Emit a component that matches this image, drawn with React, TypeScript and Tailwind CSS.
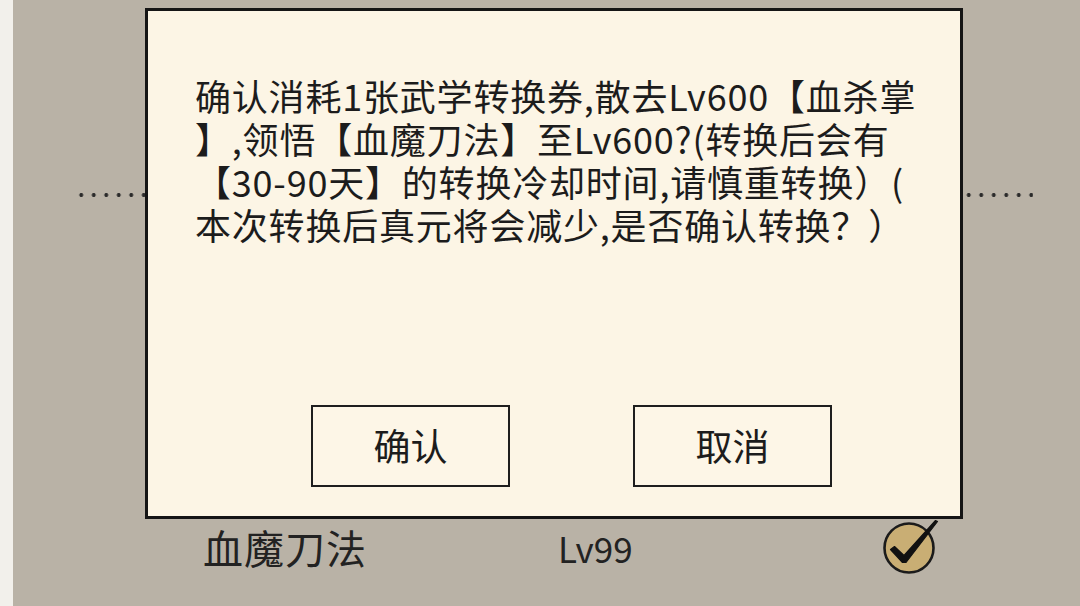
import React from "react";

const font = { fontFamily: '"Noto Sans CJK SC", "Noto Sans", sans-serif' };

function CheckBadge() {
  return (
    <svg width="60" height="60" viewBox="0 0 60 60" className="block">
      <circle cx="28" cy="30" r="24.5" fill="#c9ae74" stroke="#1b1b1b" strokeWidth="2.6" />
      <path
        d="M9.5 31.5 L13.5 28.5 L23 37.5 L54.5 2.5 L56.5 3.5 L25 44.5 L21.5 44.5 Z"
        fill="#111"
        stroke="#111"
        strokeWidth="1.2"
        strokeLinejoin="round"
      />
    </svg>
  );
}

const lines = [
  "确认消耗1张武学转换券,散去Lv600【血杀掌",
  "】,领悟【血魔刀法】至Lv600?(转换后会有",
  "【30-90天】的转换冷却时间,请慎重转换）(",
  "本次转换后真元将会减少,是否确认转换？）",
];

export default function App() {
  return (
    <div className="relative flex h-[606px] w-[1080px] overflow-hidden bg-[#b9b2a6]" style={font}>
      {/* light edge on the far left */}
      <div className="h-full w-[13px] shrink-0 bg-[#f2f0eb]" />

      {/* list underneath the dialog */}
      <div className="flex flex-1 flex-col">
        <div className="mt-[193px] ml-[62px] h-[4px] w-[958px] bg-[radial-gradient(circle,#2a2a2a_1.7px,transparent_2.2px)] bg-[length:12.5px_4px]" />
        <div className="mt-[327px] flex h-[46px] items-center">
          <span className="ml-[190px] w-[355px] text-[40px] leading-none tracking-[1px] text-[#222]">血魔刀法</span>
          <span className="text-[35px] leading-none text-[#222]">Lv99</span>
          <div className="ml-[248px] mt-[2px]">
            <CheckBadge />
          </div>
        </div>
      </div>

      {/* confirmation dialog */}
      <div className="absolute left-[145px] top-[8px] flex h-[511px] w-[818px] flex-col border-[3px] border-[#151515] bg-[#fcf5e5]">
        <div className="pl-[47px] pt-[63px] text-[36px] leading-[43px] tracking-[0.8px] text-[#1c1c1c]">
          {lines.map((l) => (
            <div key={l} className="h-[43px] whitespace-nowrap">
              {l}
            </div>
          ))}
        </div>
        <div className="mt-auto mb-[29px] flex gap-[123px] pl-[163px]">
          <button className="flex h-[82px] w-[199px] items-center justify-center border-2 border-[#1e1e1e] bg-[#fdf6e7] text-[37px] text-[#1c1c1c]">
            确认
          </button>
          <button className="flex h-[82px] w-[199px] items-center justify-center border-2 border-[#1e1e1e] bg-[#fdf6e7] text-[37px] text-[#1c1c1c]">
            取消
          </button>
        </div>
      </div>
    </div>
  );
}
